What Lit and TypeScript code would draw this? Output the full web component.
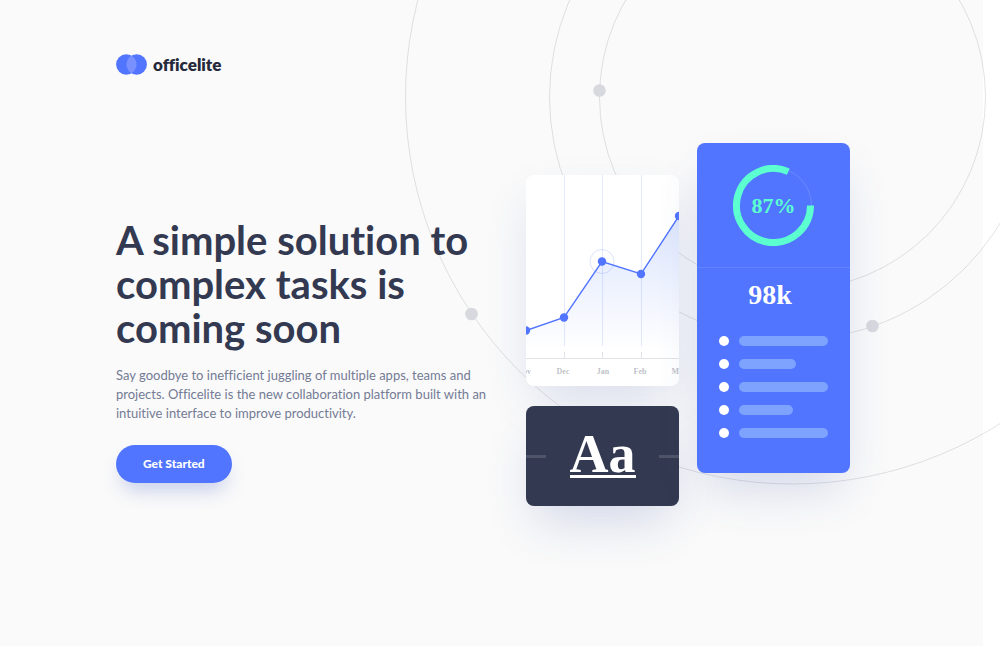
import { LitElement, html, css, svg } from "lit";
import { customElement } from "lit/decorators.js";
import { styleMap } from "lit/directives/style-map.js";

@customElement("orbit-rings")
class OrbitRings extends LitElement {
  static styles = css`
    :host { display: block; width: 776px; height: 776px; }
    .rings { display: block; overflow: visible; }
    .ring { fill: none; stroke: #333950; stroke-opacity: 0.14; }
    .dot { fill: #d8d9df; }
  `;
  render() {
    return html`<svg class="rings" width="776" height="776" viewBox="-388 -388 776 776" aria-hidden="true">
      ${[193, 243, 387].map((r) => svg`<circle class="ring" cx="-0.5" r=${r}></circle>`)}
      <circle class="dot" cx="-193.5" cy="-6.5" r="6.3"></circle>
      <circle class="dot" cx="79.5" cy="229" r="6.3"></circle>
      <circle class="dot" cx="-321.5" cy="217" r="6.3"></circle>
    </svg>`;
  }
}

@customElement("trend-card")
class TrendCard extends LitElement {
  static styles = css`
    :host {
      display: block; overflow: hidden; border-radius: 8px; background: #fff;
      box-shadow: 0 20px 48px -8px rgba(63, 91, 170, 0.18);
    }
    .chart { display: block; width: 100%; }
    .grid { stroke: #5175ff; stroke-opacity: 0.16; }
    .axis { stroke: #333950; stroke-opacity: 0.14; }
    .line { fill: none; stroke: #5175ff; stroke-width: 1.4; }
    .point { fill: #5175ff; }
    .halo { fill: none; stroke: #5175ff; stroke-opacity: 0.2; }
    .month {
      font: bold 8px "Liberation Serif", serif; fill: #333950; fill-opacity: 0.34; text-anchor: middle;
    }
  `;
  private points = [[0, 155.5], [38, 142.5], [76, 86.5], [115, 99], [153, 41]];
  private months: [number, string][] = [[-2, "Nov"], [37, "Dec"], [77, "Jan"], [114, "Feb"], [153, "Mar"]];
  render() {
    const line = this.points.map((p) => p.join(",")).join(" ");
    return html`<svg class="chart" viewBox="0 0 153 211" role="img" aria-label="Monthly trend">
      <defs>
        <linearGradient id="fade" x1="0" y1="0" x2="0" y2="1">
          <stop offset="0" stop-color="#4f7cf5" stop-opacity="0.2"></stop>
          <stop offset="1" stop-color="#4f7cf5" stop-opacity="0"></stop>
        </linearGradient>
      </defs>
      <polygon fill="url(#fade)" points="${line} 153,176 0,176"></polygon>
      ${[38.5, 76.5, 115.5].map((x) => svg`
        <line class="grid" x1=${x} x2=${x} y1="0" y2="171"></line>
        <line class="axis" x1=${x} x2=${x} y1="177" y2="183"></line>`)}
      <line class="axis" x1="0" x2="153" y1="183.5" y2="183.5"></line>
      <circle class="halo" cx="76" cy="86.5" r="12"></circle>
      <polyline class="line" points=${line}></polyline>
      ${this.points.map(([x, y]) => svg`<circle class="point" cx=${x} cy=${y} r="4.2"></circle>`)}
      ${this.months.map(([x, m]) => svg`<text class="month" x=${x} y="199">${m}</text>`)}
    </svg>`;
  }
}

@customElement("type-card")
class TypeCard extends LitElement {
  static styles = css`
    :host {
      display: flex; align-items: center; justify-content: space-between; height: 100px;
      border-radius: 8px; background: #333950; box-shadow: 0 24px 48px -8px rgba(63, 91, 170, 0.2);
    }
    .dash { width: 20px; height: 3px; background: rgba(255, 255, 255, 0.14); }
    .sample {
      padding-bottom: 2px; border-bottom: 3px solid #fff; color: #fff;
      font: bold 54px/38px "Liberation Serif", serif;
    }
  `;
  render() {
    return html`<span class="dash"></span><span class="sample">Aa</span><span class="dash"></span>`;
  }
}

@customElement("stats-card")
class StatsCard extends LitElement {
  static styles = css`
    :host {
      display: block; box-sizing: border-box; padding-bottom: 35px; border-radius: 8px; background: #5175ff;
      box-shadow: 0 24px 48px -8px rgba(63, 91, 170, 0.2);
    }
    .gauge {
      display: grid; place-items: center; padding: 22px 0 21px;
      border-bottom: 1px solid rgba(255, 255, 255, 0.1);
    }
    .gauge > * { grid-area: 1 / 1; }
    .track { fill: none; stroke: #fff; stroke-opacity: 0.14; }
    .arc { fill: none; stroke: #5bffd0; stroke-width: 7; }
    .percent { font: bold 22px/26px "Liberation Serif", serif; color: #5bffd0; }
    .total {
      margin: 12px 0 26px; padding-right: 7px; text-align: center;
      font: bold 28px/30px "Liberation Serif", serif; color: #fff;
    }
    .rows { display: grid; gap: 13px; margin: 0; padding: 0 22px; list-style: none; }
    .row { display: flex; align-items: center; gap: 10px; height: 10px; }
    .bullet { width: 10px; height: 10px; border-radius: 50%; background: #fff; }
    .bar { height: 10px; border-radius: 5px; background: #7da3ff; }
  `;
  render() {
    return html`
      <div class="gauge">
        <svg width="81" height="81" viewBox="-40.5 -40.5 81 81" aria-hidden="true">
          <circle class="track" r="38"></circle>
          <path class="arc" d="M37 0A37 37 0 1 1 14.8 -33.9"></path>
        </svg>
        <span class="percent">87%</span>
      </div>
      <p class="total">98k</p>
      <ul class="rows">
        ${[89, 57, 89, 54, 89].map((w) => html`<li class="row">
          <span class="bullet"></span><span class="bar" style=${styleMap({ width: `${w}px` })}></span>
        </li>`)}
      </ul>`;
  }
}

@customElement("app-root")
class AppRoot extends LitElement {
  static styles = css`
    :host {
      display: block; position: relative; box-sizing: border-box; min-height: 100vh; padding-right: 17px;
      overflow: hidden; background: #fff; font-family: Lato, sans-serif; color: #333950;
      font-variant-ligatures: none;
    }
    .page { box-sizing: border-box; min-height: 100vh; padding: 54px 133px 54px 116px; background: #fafafa; }
    .orbits { position: absolute; left: 405px; top: -291px; }
    .header, .hero { position: relative; }
    .brand {
      display: flex; align-items: center; gap: 6px; width: max-content; color: #25293a;
      font-size: 17px; line-height: 20px; font-weight: 800; text-decoration: none;
    }
    .mark { display: block; }
    .hero { display: flex; justify-content: space-between; align-items: flex-start; margin-top: 68px; }
    .copy { padding-top: 75px; }
    .title { margin: 0; font-size: 40px; line-height: 44px; font-weight: 700; }
    .lead { margin: 16px 0 22px; font-size: 13px; line-height: 19px; color: #747b95; }
    .title, .lead { white-space: nowrap; }
    .cta {
      height: 38px; padding: 0 27px; border: 0; border-radius: 19px; background: #5175ff; color: #fff;
      font: 900 12px/18px Lato, sans-serif; box-shadow: 0 12px 20px -6px rgba(63, 91, 194, 0.3);
    }
    .cards { display: grid; grid-template-columns: 153px 153px; gap: 18px; align-items: start; }
    .stack { display: grid; gap: 20px; padding-top: 32px; }
  `;
  render() {
    return html`
      <div class="page">
        <orbit-rings class="orbits"></orbit-rings>
        <header class="header">
          <a class="brand" href="#">
            <svg class="mark" width="31" height="21" viewBox="0 0 31 21" aria-hidden="true">
              <circle cx="10.3" cy="10.5" r="10.2" fill="#5175ff"></circle>
              <circle cx="20.7" cy="10.5" r="10.2" fill="#5175ff"></circle>
              <path d="M15.5 1.7a10.2 10.2 0 0 1 0 17.6a10.2 10.2 0 0 1 0-17.6z" fill="#7891ff"></path>
            </svg>
            <span>officelite</span>
          </a>
        </header>
        <main class="hero">
          <div class="copy">
            <h1 class="title">A simple solution to<br />complex tasks is<br />coming soon</h1>
            <p class="lead">
              Say goodbye to inefficient juggling of multiple apps, teams and<br />
              projects. Officelite is the new collaboration platform built with an<br />
              intuitive interface to improve productivity.
            </p>
            <button class="cta" type="button">Get Started</button>
          </div>
          <div class="cards">
            <div class="stack">
              <trend-card></trend-card>
              <type-card></type-card>
            </div>
            <stats-card></stats-card>
          </div>
        </main>
      </div>`;
  }
}
